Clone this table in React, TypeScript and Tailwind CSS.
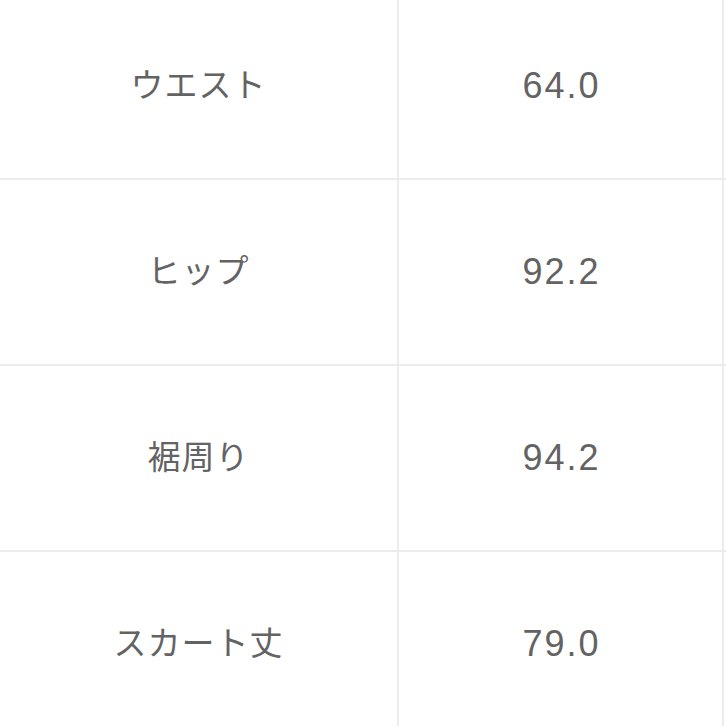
const ROWS = [
  { label: 'ウエスト', value: '64.0' },
  { label: 'ヒップ', value: '92.2' },
  { label: '裾周り', value: '94.2' },
  { label: 'スカート丈', value: '79.0' },
];

export default function App() {
  return (
    <div className="h-[726px] w-[726px] overflow-hidden bg-white font-['Liberation_Sans','Noto_Sans_CJK_JP',sans-serif] text-[#636363]">
      <div className="-mt-[6px] flex flex-col">
        {ROWS.map((row) => (
          <div key={row.label} className="flex h-[186px] border-b-2 border-[#ececec]">
            <div className="flex w-[399px] items-center justify-center border-r-2 border-[#ececec] text-[33px] tracking-[1px]">
              {row.label}
            </div>
            <div className="flex w-[325px] items-center justify-center border-r-2 border-[#ececec] pl-[2px] text-[36px] tracking-[2px]">
              {row.value}
            </div>
            <div className="flex-1" />
          </div>
        ))}
      </div>
    </div>
  );
}
